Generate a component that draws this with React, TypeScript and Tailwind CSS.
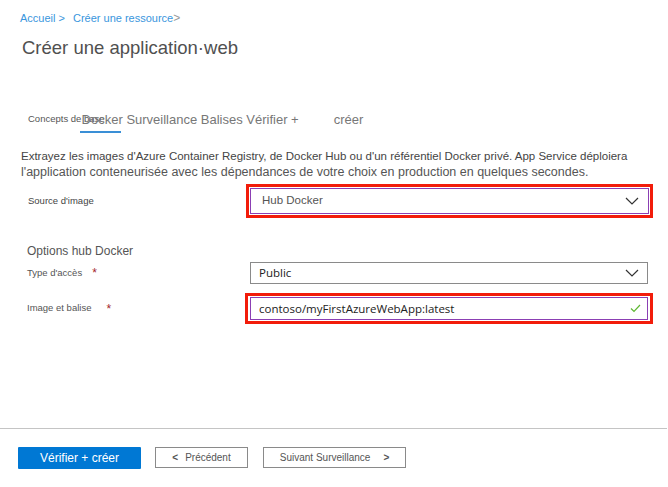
import React from 'react'

const Chevron = () => (
  <svg width="14" height="8" viewBox="0 0 14 8" fill="none">
    <path d="M1 1l6 6 6-6" stroke="#333" strokeWidth="1.2" />
  </svg>
)

const Check = () => (
  <svg width="11" height="9" viewBox="0 0 11 9" fill="none">
    <path d="M1 4.5l3 3L10 1" stroke="#5fb832" strokeWidth="1.2" />
  </svg>
)

const Star = () => <span className="text-[#a4262c] text-[12px]">*</span>

const App: React.FC = () => {
  return (
    <div
      className="w-[668px] h-[487px] bg-white flex flex-col overflow-hidden"
      style={{ fontFamily: '"Liberation Sans", Arial, sans-serif' }}
    >
      {/* fil d'ariane */}
      <div className="pt-[11px] pl-[20px] flex items-center text-[11px] leading-[14px] text-[#3a96dd]">
        <span>Accueil &gt;</span>
        <span className="ml-[8px]">Créer une ressource</span>
        <span className="text-[#999] text-[12px]">&gt;</span>
      </div>

      <h1 className="mt-[11px] pl-[22px] text-[18.5px] leading-[24px] text-[#505050]">
        Créer une application·web
      </h1>

      {/* onglets */}
      <div className="mt-[51px] pl-[28px] h-[22px] flex items-start relative">
        <span className="text-[9.5px] leading-[12px] text-[#555] mt-[2px]">Concepts de base</span>
        <div className="ml-[-25px] flex flex-col">
          <span className="text-[13px] leading-[18px] text-[#777] pl-[2px] whitespace-nowrap">
            Docker Surveillance Balises Vérifier +
          </span>
          <div className="mt-[2px] w-[41px] h-[2px] bg-[#3a8fd6]" />
        </div>
        <span className="ml-[35px] text-[13px] leading-[18px] text-[#777]">créer</span>
      </div>

      <p className="mt-[15px] pl-[21px] text-[#444] whitespace-nowrap">
        <span className="block text-[11.5px] leading-[16px]">
          Extrayez les images d&apos;Azure Container Registry, de Docker Hub ou d&apos;un référentiel Docker privé. App Service déploiera
        </span>
        <span className="block text-[12.5px] leading-[16px] text-[#555]">
          l&apos;application conteneurisée avec les dépendances de votre choix en production en quelques secondes.
        </span>
      </p>

      {/* source d'image */}
      <div className="mt-[4px] flex items-center pl-[28px]">
        <span className="w-[218px] text-[9.5px] text-[#444]">Source d&apos;image</span>
        <div className="w-[407px] h-[34px] border-[3px] border-[#f21c0a] p-[1px]">
          <div className="h-full border border-[#8b3fb4] flex items-center justify-between pl-[11px] pr-[9px]">
            <span className="text-[11.5px] text-[#555]">Hub Docker</span>
            <Chevron />
          </div>
        </div>
      </div>

      <div className="mt-[25px] pl-[27px] text-[12px] leading-[16px] text-[#555]">Options hub Docker</div>

      <div className="mt-[3px] flex items-center pl-[27px]">
        <div className="w-[223px] flex items-center gap-[10px] text-[9.5px] text-[#555]">
          <span>Type d&apos;accès</span>
          <Star />
        </div>
        <div
          className="w-[398px] h-[22px] border border-[#8a8a8a] flex items-center justify-between pl-[8px] pr-[8px]"
          style={{ fontFamily: '"Open Sans", sans-serif' }}
        >
          <span className="text-[11.5px] text-[#222]">Public</span>
          <Chevron />
        </div>
      </div>

      <div className="mt-[9px] flex items-center pl-[27px]">
        <div className="w-[218px] flex items-center gap-[15px] text-[9.5px] text-[#555]">
          <span>Image et balise</span>
          <Star />
        </div>
        <div className="w-[408px] h-[31px] border-[3px] border-[#f21c0a] pt-[1px] pb-[1px] pl-[2px] pr-[2px]">
          <div
            className="h-full border border-[#8b3fb4] flex items-center justify-between pl-[8px] pr-[6px]"
            style={{ fontFamily: '"Open Sans", sans-serif' }}
          >
            <span className="text-[11.5px] text-[#222]">contoso/myFirstAzureWebApp:latest</span>
            <Check />
          </div>
        </div>
      </div>

      <div className="flex-1" />

      {/* pied */}
      <div className="h-[1px] bg-[#c4c4c4] mr-[1px]" />
      <div className="h-[58px] pt-[18px] pl-[18px] flex items-start">
        <button className="w-[123px] h-[22px] bg-[#0078d4] text-white text-[12px] leading-[22px] rounded-[1px]">
          Vérifier + créer
        </button>
        <button className="ml-[14px] w-[93px] h-[21px] border border-[#8a8a8a] text-[10px] text-[#555] flex items-center justify-center gap-[7px]">
          <span className="font-bold">&lt;</span>
          <span>Précédent</span>
        </button>
        <button className="ml-[15px] w-[143px] h-[21px] border border-[#8a8a8a] text-[10px] text-[#555] flex items-center justify-center gap-[13px]">
          <span>Suivant Surveillance</span>
          <span className="font-bold">&gt;</span>
        </button>
      </div>
    </div>
  )
}

export default App
